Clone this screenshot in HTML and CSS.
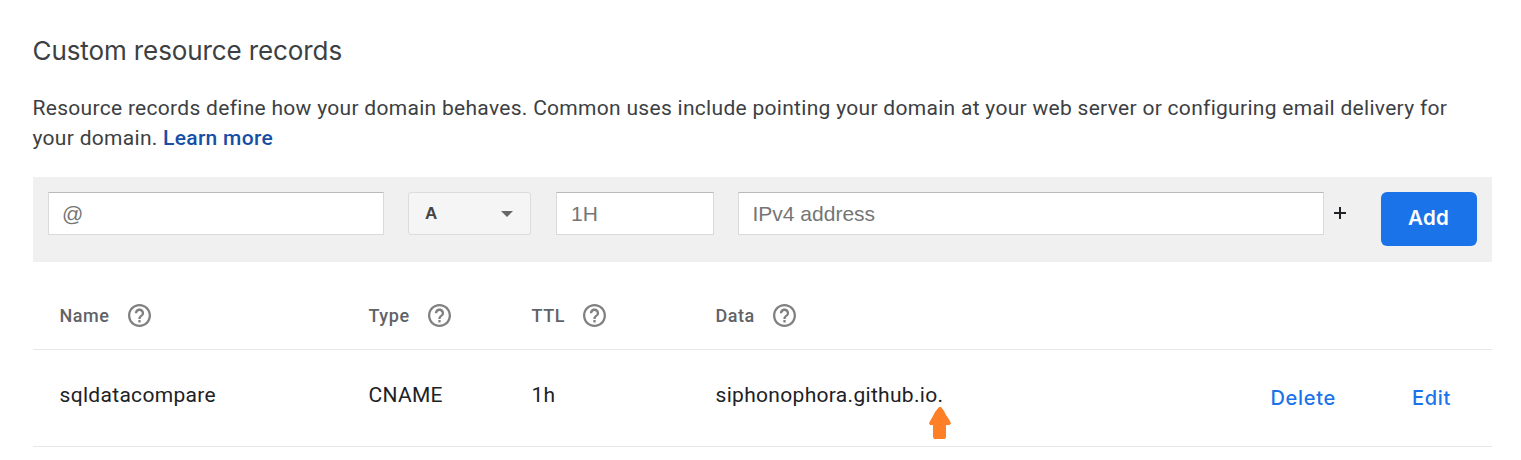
FILE: index.html
```html
<!DOCTYPE html>
<html lang="en">
<head>
<meta charset="utf-8">
<title>Custom resource records</title>
<link rel="stylesheet" href="styles.css">
</head>
<body>
<svg class="sprite" width="0" height="0" aria-hidden="true">
  <symbol id="help" viewBox="2 2 20 20">
    <path d="M11 18h2v-2h-2v2zm1-16C6.48 2 2 6.48 2 12s4.480 10 10 10 10-4.480 10-10S17.520 2 12 2zm0 18c-4.410 0-8-3.590-8-8s3.590-8 8-8 8 3.590 8 8-3.590 8-8 8zm0-14c-2.210 0-4 1.790-4 4h2c0-1.100.9-2 2-2s2 .9 2 2c0 2-3 1.750-3 5h2c0-2.250 3-2.500 3-5 0-2.210-1.790-4-4-4z"/>
  </symbol>
</svg>
<main class="panel">
  <h1 class="title">Custom resource records</h1>
  <p class="intro">Resource records define how your domain behaves. Common uses include pointing your domain at your web server or configuring email delivery for <span>your domain. </span><a class="learn">Learn more</a></p>
  <form class="add-form">
    <input class="field field-name" type="text" placeholder="@">
    <div class="select"><span>A</span><svg class="caret" width="12" height="6" viewBox="0 0 12 6"><path d="M0 0h12L6 6z"/></svg></div>
    <input class="field field-ttl" type="text" placeholder="1H">
    <input class="field field-data" type="text" placeholder="IPv4 address">
    <svg class="plus" width="12" height="12" viewBox="0 0 12 12"><path d="M5 0h2v5h5v2H7v5H5V7H0V5h5z"/></svg>
    <button class="add" type="button">Add</button>
  </form>
  <section class="records">
    <div class="row head">
      <div class="cell"><span>Name</span><svg class="help"><use href="#help"/></svg></div>
      <div class="cell"><span>Type</span><svg class="help"><use href="#help"/></svg></div>
      <div class="cell"><span>TTL</span><svg class="help"><use href="#help"/></svg></div>
      <div class="cell"><span>Data</span><svg class="help"><use href="#help"/></svg></div>
    </div>
    <div class="row record">
      <div class="cell">sqldatacompare</div>
      <div class="cell">CNAME</div>
      <div class="cell">1h</div>
      <div class="cell data">siphonophora.github.io.<svg class="pointer" width="22" height="32" viewBox="0 0 22 32"><path d="M10 0h2l3 4 2 4 4 6 1 3-2 1h-3v12l-1 2H5l-1-2V18H1l-1-2 4-7 2-4z"/></svg></div>
      <div class="actions"><a class="action">Delete</a><a class="action">Edit</a></div>
    </div>
  </section>
</main>
</body>
</html>
```

FILE: styles.css
```css
* { box-sizing: border-box; }
body { margin: 0; background: #fff; font-family: Roboto, sans-serif; color: #202124; }
.sprite { display: block; }
.panel { padding: 34px 29px 0 32.500px; }
.title { margin: 0; font: 400 26px/34px Inter, sans-serif; letter-spacing: -0.1px; color: #3c4043; white-space: nowrap; }
.intro { margin: 25px 0 0; font-size: 21px; line-height: 30px; letter-spacing: 0.295px; color: #3c4043; }
.learn { color: #174ea6; font-weight: 500; }
.add-form { display: flex; align-items: flex-start; height: 85px; margin: 24px 0 0 0.5px; padding: 15px; background: #f0f0f0; }
.field { height: 43px; margin: 0; padding: 1px 14px 0; border: 1px solid #d9d9d9; border-top-color: #b9b9b9; border-radius: 1px; background: #fff; font: 21px "Liberation Sans", Arial, sans-serif; outline: none; }
.field::placeholder { color: #757575; opacity: 1; }
.field-name { width: 336px; padding-left: 13px; }
.field-ttl { width: 158px; }
.field-data { width: 586px; margin-left: 24px; padding-left: 13.500px; }
.select { display: flex; align-items: center; justify-content: space-between; width: 123px; height: 43px; margin: 0 25px 0 24px; padding: 0 17px 0 16px; border: 1px solid #dcdcdc; border-radius: 3px; background: #f5f5f5; color: #444; font: 700 17px "Liberation Sans", Arial, sans-serif; }
.caret { fill: #666; }
.plus { margin: 15px 0 0 10px; fill: #202124; }
.add { width: 96px; height: 54px; margin-left: auto; padding: 0 1px 3px 0; border: 0; border-radius: 6px; background: #1a73e8; color: #fff; font: 600 20.500px Inter, sans-serif; letter-spacing: 0.2px; }
.row { display: grid; grid-template-columns: 309px 163px 184px 1fr auto; margin-left: 0.5px; padding-left: 26.500px; border-bottom: 1px solid #e8e8e8; }
.head { height: 88px; padding-top: 20px; align-items: center; font-size: 18px; font-weight: 500; letter-spacing: 0.55px; color: #5f6368; }
.head .cell { display: flex; align-items: center; gap: 18px; }
.help { width: 23px; height: 23px; fill: #808080; }
.record { height: 97px; padding-bottom: 6px; align-items: center; font-size: 21px; letter-spacing: 0.31px; }
.data { position: relative; justify-self: start; }
.pointer { position: absolute; right: -8px; top: 24px; fill: #ff7f27; }
.actions { display: flex; gap: 76px; padding: 6px 41px 0 0; }
.action { color: #1a73e8; font: 500 20px/26px Inter, sans-serif; letter-spacing: 0.7px; }
```
